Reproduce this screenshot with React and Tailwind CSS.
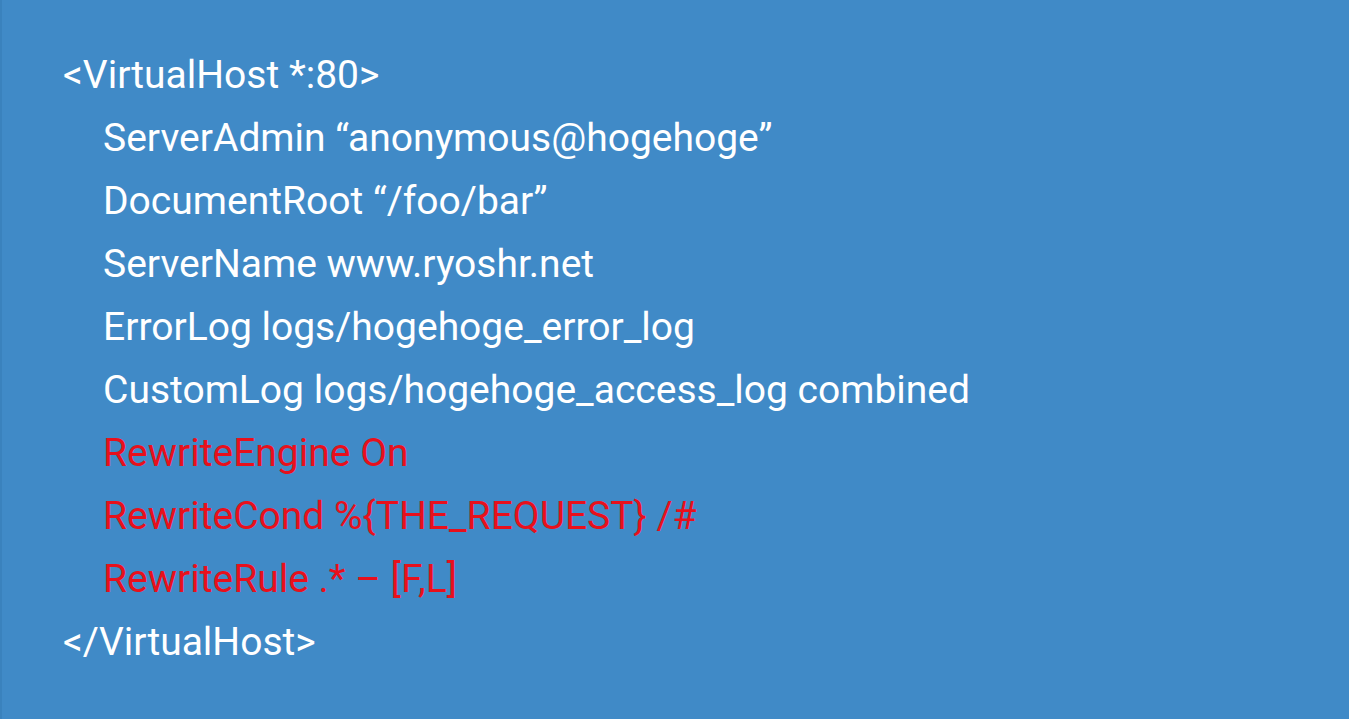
import React from "react";

const lines = [
  { text: "<VirtualHost *:80>", indent: false },
  { text: "ServerAdmin \u201canonymous@hogehoge\u201d", indent: true },
  { text: "DocumentRoot \u201c/foo/bar\u201d", indent: true },
  { text: "ServerName www.ryoshr.net", indent: true },
  { text: "ErrorLog logs/hogehoge_error_log", indent: true },
  { text: "CustomLog logs/hogehoge_access_log combined", indent: true },
  { text: "RewriteEngine On", indent: true, red: true },
  { text: "RewriteCond %{THE_REQUEST} /#", indent: true, red: true },
  { text: "RewriteRule .* \u2013 [F,L]", indent: true, red: true },
  { text: "</VirtualHost>", indent: false },
];

export default function App() {
  return (
    <div className="w-[1349px] h-[719px] bg-[#408ac7] border-l-2 border-[#3a82bd] overflow-hidden font-['Roboto',sans-serif]">
      <div className="pt-[44px] pl-[61px] flex flex-col">
        {lines.map((line, i) => (
          <div
            key={i}
            className={`h-[63px] leading-[63px] text-[39px] whitespace-pre ${line.indent ? "pl-[40px]" : ""} ${line.red ? "text-[#e8101c]" : "text-white"}`}
          >
            {line.text}
          </div>
        ))}
      </div>
    </div>
  );
}
